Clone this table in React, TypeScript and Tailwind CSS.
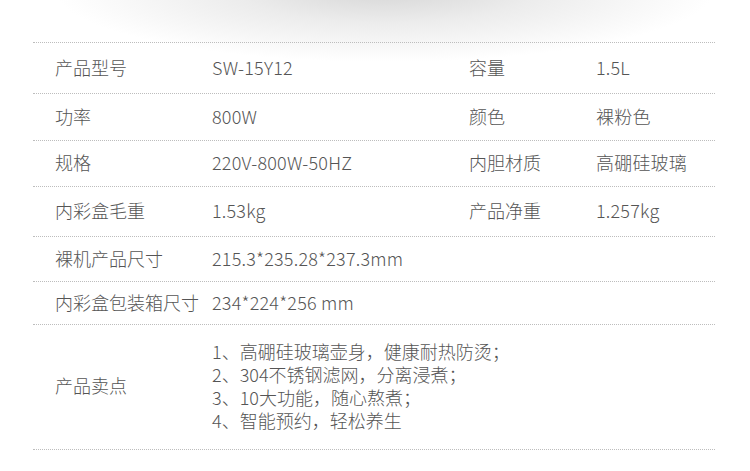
import React from 'react';

const specRows = [
  { label: '产品型号', value: 'SW-15Y12', label2: '容量', value2: '1.5L', h: 'h-[51px]' },
  { label: '功率', value: '800W', label2: '颜色', value2: '裸粉色', h: 'h-[47px]' },
  { label: '规格', value: '220V-800W-50HZ', label2: '内胆材质', value2: '高硼硅玻璃', h: 'h-[46px]' },
  { label: '内彩盒毛重', value: '1.53kg', label2: '产品净重', value2: '1.257kg', h: 'h-[50px]' },
  { label: '裸机产品尺寸', value: '215.3*235.28*237.3mm', label2: '', value2: '', h: 'h-[45px]' },
  { label: '内彩盒包装箱尺寸', value: '234*224*256 mm', label2: '', value2: '', h: 'h-[43px]' },
];

const sellingPoints = [
  '1、高硼硅玻璃壶身，健康耐热防烫；',
  '2、304不锈钢滤网，分离浸煮；',
  '3、10大功能，随心熬煮；',
  '4、智能预约，轻松养生',
];

const App = () => {
  return (
    <div
      className="w-[750px] h-[471px] bg-white bg-[radial-gradient(ellipse_330px_72px_at_385px_-10px,#d6d6d6_0%,#ececec_45%,#ffffff_100%)] text-[#555] text-[18px] overflow-hidden"
      style={{ fontFamily: '"Noto Sans CJK SC", "Noto Sans", sans-serif' }}
    >
      <div className="h-[42px]" />
      <div className="ml-[33px] w-[682px] border-t border-dotted border-[#bdbdbd] font-light">
        {specRows.map((row, i) => (
          <div key={i} className={`flex items-center pb-[2px] border-b border-dotted border-[#bdbdbd] ${row.h}`}>
            <div className="pl-[22px] w-[179px] shrink-0 whitespace-nowrap">{row.label}</div>
            <div className="w-[257px] shrink-0 whitespace-nowrap tracking-[0.2px]">{row.value}</div>
            <div className="w-[127px] shrink-0 whitespace-nowrap">{row.label2}</div>
            <div className="whitespace-nowrap tracking-[0.2px]">{row.value2}</div>
          </div>
        ))}
        <div className="flex items-center h-[125px] pb-[3px] border-b border-dotted border-[#bdbdbd]">
          <div className="pl-[22px] w-[179px] shrink-0">产品卖点</div>
          <div className="leading-[23px]">
            {sellingPoints.map((p, i) => (
              <div key={i}>{p}</div>
            ))}
          </div>
        </div>
      </div>
    </div>
  );
};

export default App;
